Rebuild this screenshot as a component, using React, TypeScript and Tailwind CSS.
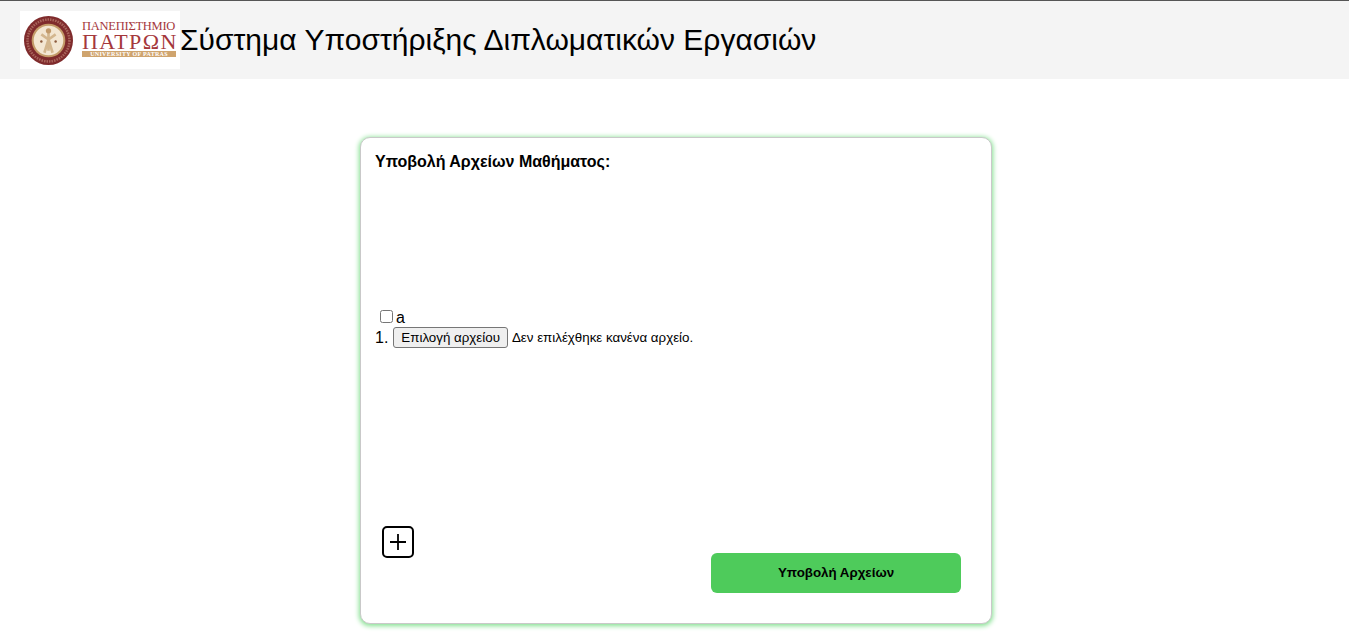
function Logo() {
  return (
    <div className="flex h-[58px] w-[160px] shrink-0 items-center bg-white pl-[4px]">
      <svg width="49" height="49" viewBox="0 0 48 48" className="shrink-0">
        <circle cx="24" cy="24" r="24" fill="#7f2b2c" />
        <circle cx="24" cy="24" r="20.5" fill="none" stroke="#a9655c" strokeWidth="2.5" strokeDasharray="1.5 1" />
        <circle cx="24" cy="24" r="16.5" fill="#c39a68" />
        <circle cx="24" cy="24" r="14.5" fill="#f3e6d2" />
        <path d="M24 14v20M17 18l7 5 7-5M20 36l4-13 4 13" stroke="#d3b68e" strokeWidth="2.6" fill="none" />
        <circle cx="24" cy="14.5" r="2.6" fill="#c29a6b" />
        <circle cx="17" cy="25" r="1.2" fill="#8c5a3c" />
        <circle cx="31" cy="25" r="1.2" fill="#8c5a3c" />
      </svg>
      <div className="ml-[9px] flex w-[94px] flex-col pb-1 font-['Liberation_Serif',serif] text-[#a5383c]">
        <div className="text-[12.5px] leading-[13px] tracking-[-0.25px] whitespace-nowrap">ΠΑΝΕΠΙΣΤΗΜΙΟ</div>
        <div className="text-[22px] leading-[17px] tracking-[1.4px] whitespace-nowrap">ΠΑΤΡΩΝ</div>
        <div className="mt-[1px] h-[6px] bg-[#cfa46e] text-center text-[6px] leading-[6px] font-bold tracking-[0.3px] whitespace-nowrap text-white">
          UNIVERSITY OF PATRAS
        </div>
      </div>
    </div>
  )
}

export default function App() {
  return (
    <div className="min-h-[634px] overflow-hidden bg-white font-['Liberation_Sans',Arial,sans-serif] text-black">
      <header className="flex h-[79px] items-center border-t border-[#555] bg-[#f4f4f4] pl-5">
        <Logo />
        <h1 className="text-[30px] leading-none font-normal whitespace-nowrap">
          Σύστημα Υποστήριξης Διπλωματικών Εργασιών
        </h1>
      </header>

      <main className="flex justify-center pt-[58px] pl-[3px]">
        <form className="flex h-[487px] w-[632px] flex-col rounded-[10px] border border-[#c9c9c9] bg-white pt-[14px] pr-[15px] pl-[14px] shadow-[0_1px_5px_1px_#84e090]">
          <h2 className="text-base leading-[19px] font-bold">Υποβολή Αρχείων Μαθήματος:</h2>

          <div className="mt-[138px] text-base leading-[18px]">
            <label className="flex items-start pl-[5px]">
              <input type="checkbox" className="mt-[1px] mr-[3px] h-[13px] w-[13px]" />
              <span>a</span>
            </label>
            <div className="flex items-center">
              <span>1.</span>
              <button
                type="button"
                className="mr-1 ml-[5px] h-[21px] rounded-[3px] border border-[#767676] bg-[#efefef] px-[7px] text-[13.33px] leading-none"
              >
                Επιλογή αρχείου
              </button>
              <span className="text-[13.33px]">Δεν επιλέχθηκε κανένα αρχείο.</span>
            </div>
          </div>

          <div className="mt-[178px] flex items-start justify-between pr-[15px] pl-[7px]">
            <button type="button" aria-label="Προσθήκη" className="block h-8 w-8">
              <svg width="32" height="32" viewBox="0 0 32 32" fill="none" stroke="black">
                <rect x="1" y="1" width="30" height="30" rx="4" strokeWidth="2" />
                <path d="M16 8v16M8 16h16" strokeWidth="1.8" />
              </svg>
            </button>
            <button
              type="submit"
              className="mt-[27px] h-10 w-[250px] rounded-[6px] bg-[#4ecb5b] text-[13.33px] font-bold"
            >
              Υποβολή Αρχείων
            </button>
          </div>
        </form>
      </main>
    </div>
  )
}
